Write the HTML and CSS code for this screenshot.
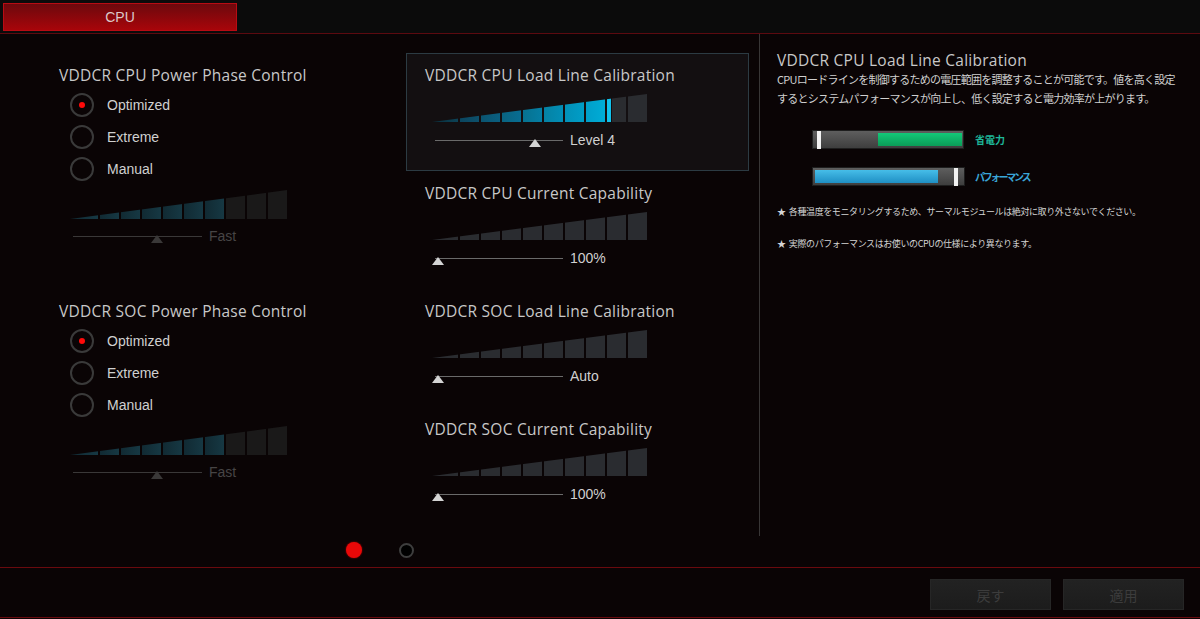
FILE: index.html
```html
<!DOCTYPE html>
<html lang="ja">
<head>
    <meta charset="UTF-8">
    <meta name="viewport" content="width=device-width, initial-scale=1.0">
    <title>CPU</title>
    <link rel="stylesheet" href="styles.css">
</head>
<body>
    <div class="topbar">
        <div class="tab">CPU</div>
    </div>

    <div class="main">
        <div class="content">
            <div class="columns">
                <div class="col-left">
                    <div class="group">
                        <div class="title">VDDCR CPU Power Phase Control</div>
                        <div class="radios">
                            <div class="radio checked"><span class="circle"></span>Optimized</div>
                            <div class="radio"><span class="circle"></span>Extreme</div>
                            <div class="radio"><span class="circle"></span>Manual</div>
                        </div>
                        <div class="meter disabled">
                            <div class="bars dim">
                                <span class="on"></span><span class="on"></span><span class="on"></span><span class="on"></span><span class="on"></span><span class="on"></span><span class="on"></span><span></span><span></span><span></span>
                            </div>
                            <div class="slider">
                                <div class="track"><span class="thumb mid"></span></div>
                                <span class="value">Fast</span>
                            </div>
                        </div>
                    </div>

                    <div class="group">
                        <div class="title">VDDCR SOC Power Phase Control</div>
                        <div class="radios">
                            <div class="radio checked"><span class="circle"></span>Optimized</div>
                            <div class="radio"><span class="circle"></span>Extreme</div>
                            <div class="radio"><span class="circle"></span>Manual</div>
                        </div>
                        <div class="meter disabled">
                            <div class="bars dim">
                                <span class="on"></span><span class="on"></span><span class="on"></span><span class="on"></span><span class="on"></span><span class="on"></span><span class="on"></span><span></span><span></span><span></span>
                            </div>
                            <div class="slider">
                                <div class="track"><span class="thumb mid"></span></div>
                                <span class="value">Fast</span>
                            </div>
                        </div>
                    </div>
                </div>

                <div class="col-mid">
                    <div class="item selected">
                        <div class="title">VDDCR CPU Load Line Calibration</div>
                        <div class="meter">
                            <div class="bars hot">
                                <span class="on"></span><span class="on"></span><span class="on"></span><span class="on"></span><span class="on"></span><span class="on"></span><span class="on"></span><span class="on"></span><span class="edge"></span><span></span>
                            </div>
                            <div class="slider">
                                <div class="track"><span class="thumb level4"></span></div>
                                <span class="value">Level 4</span>
                            </div>
                        </div>
                    </div>

                    <div class="item">
                        <div class="title">VDDCR CPU Current Capability</div>
                        <div class="meter">
                            <div class="bars">
                                <span></span><span></span><span></span><span></span><span></span><span></span><span></span><span></span><span></span><span></span>
                            </div>
                            <div class="slider">
                                <div class="track"><span class="thumb"></span></div>
                                <span class="value">100%</span>
                            </div>
                        </div>
                    </div>

                    <div class="item">
                        <div class="title">VDDCR SOC Load Line Calibration</div>
                        <div class="meter">
                            <div class="bars">
                                <span></span><span></span><span></span><span></span><span></span><span></span><span></span><span></span><span></span><span></span>
                            </div>
                            <div class="slider">
                                <div class="track"><span class="thumb"></span></div>
                                <span class="value">Auto</span>
                            </div>
                        </div>
                    </div>

                    <div class="item">
                        <div class="title">VDDCR SOC Current Capability</div>
                        <div class="meter">
                            <div class="bars">
                                <span></span><span></span><span></span><span></span><span></span><span></span><span></span><span></span><span></span><span></span>
                            </div>
                            <div class="slider">
                                <div class="track"><span class="thumb"></span></div>
                                <span class="value">100%</span>
                            </div>
                        </div>
                    </div>
                </div>
            </div>

            <div class="pager">
                <span class="page-dot active"></span>
                <span class="page-dot"></span>
            </div>
        </div>

        <div class="vline"></div>

        <div class="info">
            <div class="info-title">VDDCR CPU Load Line Calibration</div>
            <div class="info-desc">CPUロードラインを制御するための電圧範囲を調整することが可能です。値を高く設定<br>するとシステムパフォーマンスが向上し、低く設定すると電力効率が上がります。</div>

            <div class="gauge-row">
                <div class="gauge power">
                    <span class="marker"></span>
                    <span class="fill"></span>
                </div>
                <span class="gauge-label green">省電力</span>
            </div>
            <div class="gauge-row">
                <div class="gauge perf">
                    <span class="fill"></span>
                    <span class="marker"></span>
                </div>
                <span class="gauge-label blue">パフォーマンス</span>
            </div>

            <div class="note">★&nbsp; 各種温度をモニタリングするため、サーマルモジュールは絶対に取り外さないでください。</div>
            <div class="note">★&nbsp; 実際のパフォーマンスはお使いのCPUの仕様により異なります。</div>
        </div>
    </div>

    <div class="footer">
        <button class="foot-btn">戻す</button>
        <button class="foot-btn">適用</button>
    </div>
</body>
</html>
```

FILE: styles.css
```css
body {
    margin: 0;
    width: 1200px;
    height: 619px;
    overflow: hidden;
    background: #0a0405;
    color: #c8c8c8;
    font-family: "Liberation Sans", Arial, "Noto Sans CJK JP", sans-serif;
}

/* top tab bar */
.topbar {
    height: 34px;
    box-sizing: border-box;
    padding: 3px 0 0 3px;
    background: #0b0b0b;
    border-bottom: 1px solid #5c0a10;
}

.tab {
    width: 232px;
    height: 26px;
    line-height: 26px;
    text-align: center;
    font-size: 14px;
    color: #dcc8c8;
    background: linear-gradient(#6c090d, #a8050a);
    border: 1px solid #b80c14;
}

/* main area */
.main {
    display: flex;
    height: 533px;
    border-bottom: 1px solid #6a0a0e;
}

.content {
    width: 759px;
    display: flex;
    flex-direction: column;
}

.columns {
    display: flex;
    height: 500px;
}

.col-left {
    width: 347px;
    padding: 31px 0 0 59px;
}

.group {
    height: 236px;
}

.title,
.info-title {
    font-family: "Open Sans", sans-serif;
    font-size: 15.5px;
    letter-spacing: 0.25px;
    line-height: 20px;
    color: #c8c8c8;
    white-space: nowrap;
}

.radios {
    margin: 4px 0 0 11px;
}

.radio {
    display: flex;
    align-items: center;
    height: 32px;
    font-size: 14px;
    color: #d0d0d0;
}

.circle {
    width: 20px;
    height: 20px;
    border: 2px solid #3a3a3a;
    border-radius: 50%;
    margin-right: 13px;
    display: flex;
    align-items: center;
    justify-content: center;
}

.radio.checked .circle::after {
    content: "";
    width: 6px;
    height: 6px;
    border-radius: 50%;
    background: #ff0a0a;
}

/* wedge bar graphs */
.meter {
    margin-left: 11px;
}

.bars {
    display: flex;
    gap: 2px;
    width: 217px;
    height: 29px;
    margin-top: 5px;
    clip-path: polygon(0 100%, 100% 0, 100% 100%);
}

.bars span {
    flex: 0 0 19px;
    background: #2a2c30;
}

.bars span:first-child {
    flex-basis: 28px;
}

.bars.dim span {
    background: #1a1919;
}

.bars.dim span.on {
    background: linear-gradient(90deg, #112a33, #163843);
}

.bars.hot span:nth-child(1) { background: linear-gradient(90deg, #0a2f3d, #0c4256); }
.bars.hot span:nth-child(2) { background: linear-gradient(90deg, #0b4660, #0d506b); }
.bars.hot span:nth-child(3) { background: linear-gradient(90deg, #0b5470, #0a5f80); }
.bars.hot span:nth-child(4) { background: linear-gradient(90deg, #096380, #086d92); }
.bars.hot span:nth-child(5) { background: linear-gradient(90deg, #077290, #057ea4); }
.bars.hot span:nth-child(6) { background: linear-gradient(90deg, #0582a4, #028eb6); }
.bars.hot span:nth-child(7) { background: linear-gradient(90deg, #0291b8, #009dc7); }
.bars.hot span:nth-child(8) { background: linear-gradient(90deg, #009fca, #00acd6); }

.bars.hot span.edge {
    background: linear-gradient(90deg, #12c2ec 0 4px, transparent 4px 5px, #2a2c30 5px);
}

.slider {
    display: flex;
    align-items: center;
    height: 16px;
    margin-top: 9px;
}

.track {
    position: relative;
    width: 129px;
    height: 1px;
    margin-left: 3px;
    background: #6a6a6a;
}

.thumb {
    position: absolute;
    top: -1px;
    left: -3px;
    width: 0;
    height: 0;
    border-left: 6px solid transparent;
    border-right: 6px solid transparent;
    border-bottom: 8px solid #d4d4d4;
}

.thumb.mid {
    left: 78px;
}

.thumb.level4 {
    left: 94px;
}

.value {
    margin-left: 7px;
    font-size: 14px;
    color: #d0d0d0;
}

.disabled .track {
    background: #3a3838;
}

.disabled .thumb {
    border-bottom-color: #3a3838;
}

.disabled .value {
    color: #474545;
}

/* middle column */
.col-mid {
    width: 343px;
    padding-top: 19px;
}

.item {
    height: 118px;
    box-sizing: border-box;
    border: 1px solid transparent;
    padding: 11px 0 0 18px;
}

.item.selected {
    border-color: #2c3b43;
    background: #130f11;
}

.item .meter {
    margin-left: 7px;
}

.item .bars {
    width: 215px;
    height: 28px;
    margin-top: 9px;
}

.item .bars span:first-child {
    flex-basis: 26px;
}

.item .slider {
    margin-top: 10px;
}

.item .track {
    width: 128px;
}

/* pager */
.pager {
    display: flex;
    align-items: center;
    height: 32px;
    padding-left: 346px;
    gap: 37px;
}

.page-dot {
    width: 11px;
    height: 11px;
    border: 2px solid #3e3e3e;
    border-radius: 50%;
    background: #000;
}

.page-dot.active {
    width: 16px;
    height: 16px;
    border: none;
    background: #e80808;
    box-shadow: 0 0 2px #a00;
}

.vline {
    width: 1px;
    height: 502px;
    background: #383636;
}

/* info panel */
.info {
    flex: 1;
    padding: 16px 0 0 17px;
}

.info-desc {
    font-family: "Noto Sans CJK JP", sans-serif;
    font-size: 11px;
    letter-spacing: -0.75px;
    line-height: 19px;
    color: #d0d0d0;
    white-space: nowrap;
}

.gauge-row {
    display: flex;
    align-items: center;
    margin: 22px 0 0 35px;
}

.gauge-row + .gauge-row {
    margin-top: 18px;
}

.gauge {
    display: flex;
    align-items: center;
    width: 147px;
    height: 17px;
    border: 1px solid #1e1e1e;
    background: linear-gradient(#5e5e5e, #3e3e3e);
    padding: 0 2px;
}

.gauge .marker {
    width: 4px;
    height: 18px;
    background: #f2f2f2;
}

.gauge .fill {
    height: 13px;
}

.gauge.power {
    width: 145px;
    padding: 0 1px 0 4px;
}

.gauge.power .fill {
    width: 84px;
    margin-left: auto;
    background: linear-gradient(#12c878, #0b9d58);
}

.gauge.perf .fill {
    width: 123px;
    background: linear-gradient(#46bde8, #1f8fc4);
}

.gauge.perf .marker {
    margin: 0 4px 0 auto;
}

.gauge-label {
    margin-left: 11px;
    font-family: "Noto Sans CJK JP", sans-serif;
    font-size: 10px;
    font-weight: bold;
}

.gauge-label.green {
    color: #1eb89a;
}

.gauge-label.blue {
    margin-left: 10px;
    letter-spacing: -2.2px;
    color: #3aa6d8;
}

.note {
    margin-top: 18px;
    font-family: "Noto Sans CJK JP", sans-serif;
    font-size: 9px;
    letter-spacing: -0.4px;
    line-height: 16px;
    color: #d4d4d4;
    white-space: nowrap;
}

.note + .note {
    margin-top: 16px;
}

/* footer */
.footer {
    display: flex;
    justify-content: flex-end;
    gap: 12px;
    height: 50px;
    padding: 11px 16px 0 0;
    box-sizing: border-box;
    border-bottom: 1px solid #6a0a0e;
}

.foot-btn {
    width: 121px;
    height: 31px;
    border: 1px solid #262626;
    background: linear-gradient(#222, #1c1c1c);
    color: #3c3c3c;
    font-family: "Noto Sans CJK JP", sans-serif;
    font-size: 14px;
    padding: 0;
}
```
